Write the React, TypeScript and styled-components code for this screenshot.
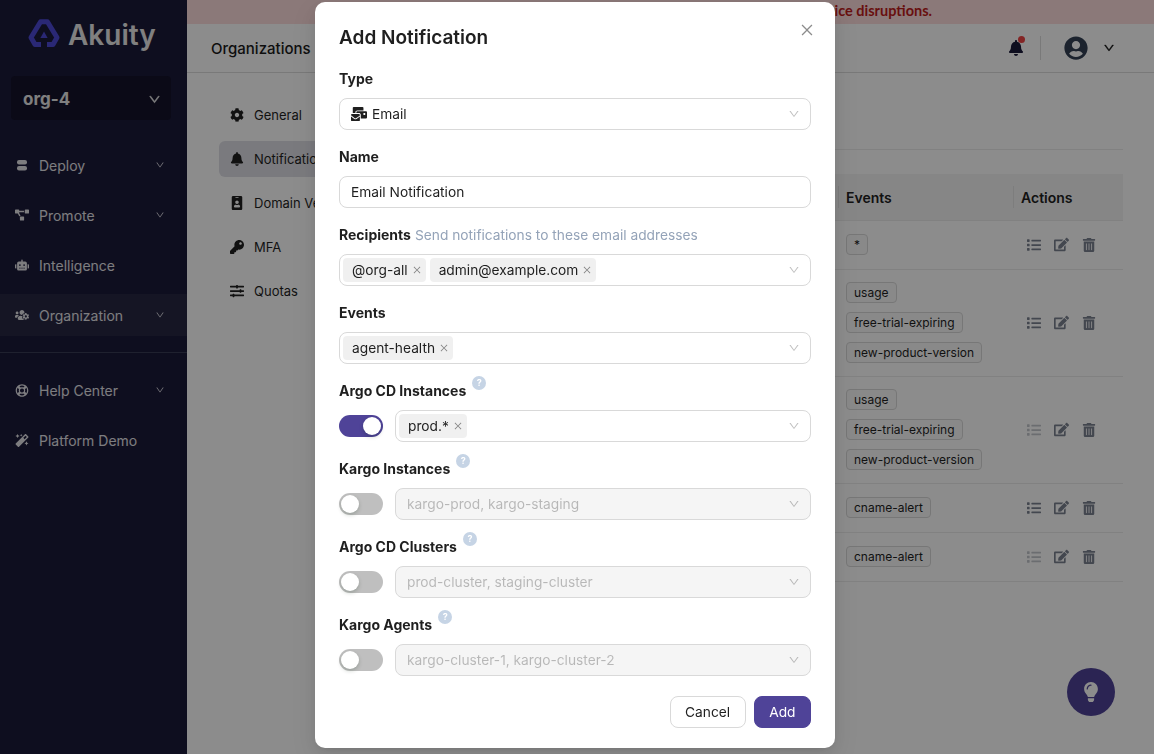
import React from "react";
import styled, { createGlobalStyle } from "styled-components";
import { AiOutlineClose, AiOutlineDown } from "react-icons/ai";
import {
  FaBell, FaCog, FaEdit, FaIdBadge, FaKey, FaLightbulb, FaList, FaMagic, FaMailBulk,
  FaProjectDiagram, FaRegLifeRing, FaRobot, FaSlidersH, FaTrashAlt, FaUserCircle, FaUsersCog,
} from "react-icons/fa";

const Global = createGlobalStyle`
  html, body { margin: 0; height: 100%; overflow: hidden; background: #fff; }
  body { font-family: Inter, "Liberation Sans", sans-serif; font-size: 14px; color: #1f1f1f; }
  * { box-sizing: border-box; }
`;

const Page = styled.div`display: flex; height: 754px; width: 1154px;`;

const Sidebar = styled.aside`
  width: 187px; flex: none; background: #1b1a3a; color: #e8e8e8; display: flex; flex-direction: column;
`;
const LogoRow = styled.div`display: flex; gap: 8px; padding: 19px 0 0 28px; height: 76px; align-items: flex-start;`;
const LogoText = styled.span`font-size: 28px; font-weight: 600; line-height: 32px; color: #e9e9e9;`;
const OrgSelect = styled.div`
  margin: 0 16px 0 11px; height: 44px; background: #14132b; border-radius: 4px; display: flex; align-items: center;
  justify-content: space-between; padding: 2px 10px 0 12px; font-size: 17px; font-weight: 700; color: #e8e8e8; line-height: 1;
`;
const NavList = styled.nav<{ $top: number }>`display: flex; flex-direction: column; margin-top: ${(p) => p.$top}px; gap: 8px;`;
const NavItem = styled.div<{ $active?: boolean }>`
  height: 42px; display: flex; align-items: center; padding: 0 22px 0 15px; gap: 10px; color: #e3e3e8; font-size: 14px;
  background: ${(p) => (p.$active ? "#272743" : "transparent")};
  & > span { flex: 1; }
  & > svg:first-child { width: 14px; flex: none; }
`;
const NavDivider = styled.hr`border: 0; border-top: 1px solid #3a3c57; margin: 16px 0; width: 100%;`;

const Main = styled.main`flex: 1; min-width: 0; display: flex; flex-direction: column;`;
const Banner = styled.div`
  height: 24px; background: #fddcdc; color: #bf1c1c; font-family: Lato, sans-serif; font-weight: 700; font-size: 14.5px;
  display: flex; align-items: center; justify-content: flex-end; padding: 0 222px 4px 0; white-space: nowrap;
`;
const Header = styled.header`
  height: 49px; border-bottom: 1px solid #dcdcdc; display: flex; align-items: center; padding: 0 39px 0 24px; color: #111;
`;
const HeaderTitle = styled.div`flex: 1; font-size: 15px; font-weight: 500; color: #1a1a1a;`;
const BellBox = styled.div`position: relative; display: flex; color: #1b1a3a; margin-right: 16px;`;
const BellDot = styled.span`position: absolute; right: -1px; top: -4px; width: 7px; height: 7px; border-radius: 50%; background: #ef4444;`;
const VDivider = styled.div`width: 1px; height: 24px; background: #dcdcdc; margin-right: 23px;`;
const Avatar = styled(FaUserCircle)`color: #334155; margin-right: 15px;`;
const HeaderCaret = styled(AiOutlineDown)`stroke: currentColor; stroke-width: 40;`;

const Content = styled.div`flex: 1; display: flex; padding: 24px 31px 0 32px;`;
const SideMenu = styled.div`width: 130px; flex: none; display: flex; flex-direction: column; gap: 8px; white-space: nowrap;`;
const MenuItem = styled.div<{ $active?: boolean }>`
  height: 36px; width: 180px; display: flex; align-items: center; gap: 10px; padding: 0 11px; border-radius: 6px; font-size: 13px; color: #1f1f1f;
  background: ${(p) => (p.$active ? "#dfdfe6" : "transparent")};
`;
const TablePanel = styled.section`flex: 1; min-width: 0; padding-top: 43px;`;
const SectionRule = styled.div`height: 10px; border-bottom: 1px solid #ececec;`;
const Table = styled.div`
  margin-top: 24px; display: grid; grid-template-columns: 1fr 175px 110px;
`;
const HeadCell = styled.div<{ $sep?: boolean }>`
  height: 47px; background: #f5f5f5; border-bottom: 1px solid #ececec; font-weight: 600; font-size: 14px; color: #222;
  display: flex; align-items: center; padding: 0 0 0 8px; position: relative;
  &:first-child { border-top-left-radius: 8px; }
  &:last-child { border-top-right-radius: 8px; }
  ${(p) => p.$sep && `&::before { content: ""; position: absolute; left: 0; top: 12px; height: 22px; width: 1px; background: #e4e4e4; }`}
`;
const Cell = styled.div`
  min-height: 49px; border-bottom: 1px solid #ececec; padding: 12px 8px 13px; display: flex; flex-direction: column; align-items: flex-start; gap: 9px; justify-content: center;
`;
const Tag = styled.span`
  height: 21px; line-height: 19px; padding: 0 7px; font-size: 12px; border: 1px solid #d9d9d9; border-radius: 4px; background: #fafafa; color: #1f1f1f; white-space: nowrap;
`;
const Actions = styled.div`display: flex; align-items: center; gap: 13px; padding-left: 6px; height: 100%; color: #7b8290;`;
const ActionIcon = styled.span<{ $dim?: boolean }>`display: flex; opacity: ${(p) => (p.$dim ? 0.45 : 1)};`;

const Fab = styled.div`
  position: fixed; left: 1067px; top: 668px; width: 48px; height: 48px; border-radius: 50%; background: #4f4398; color: #fff;
  display: flex; align-items: center; justify-content: center;
`;

const Overlay = styled.div`
  position: fixed; inset: 0; background: rgba(0, 0, 0, 0.45); padding: 2px 0 0 315px;
`;
const Modal = styled.div`
  width: 520px; height: 746px; background: #fff; border-radius: 10px; padding: 21px 24px 20px; position: relative;
  box-shadow: 0 6px 16px rgba(0,0,0,.08), 0 3px 6px -4px rgba(0,0,0,.12), 0 9px 28px 8px rgba(0,0,0,.05);
`;
const CloseBtn = styled.div`position: absolute; top: 20px; right: 20px; color: rgba(0,0,0,.45); display: flex;`;
const Title = styled.h2`margin: 0 0 17px; font-size: 19px; line-height: 30px; height: 28px; font-weight: 600; color: #1f1f1f;`;
const Field = styled.div`margin-bottom: 16px;`;
const LabelRow = styled.div<{ $gap?: number }>`display: flex; align-items: flex-start; gap: ${(p) => p.$gap ?? 6}px; height: 22px; margin-bottom: 8px; line-height: 22px;`;
const LabelText = styled.label`font-size: 14px; font-weight: 700; color: #1f1f1f;`;
const LabelHint = styled.span`font-size: 13.75px; font-weight: 400; color: #94a3b8;`;
const Help = styled.span`
  width: 14px; height: 14px; border-radius: 50%; background: #c6d4e5; color: #fff; font-size: 9px; font-weight: 700; line-height: 14px; text-align: center; margin-top: -4px;
`;
const Row = styled.div`display: flex; align-items: center; gap: 12px;`;
const SelectBox = styled.div<{ $disabled?: boolean; $tags?: boolean }>`
  flex: 1; min-width: 0; height: 32px; border: 1px solid #d9d9d9; border-radius: 8px; display: flex; align-items: center; gap: 4px;
  padding: 0 10px 0 ${(p) => (p.$tags ? "3px" : "11px")};
  background: ${(p) => (p.$disabled ? "#f5f5f5" : "#fff")}; color: ${(p) => (p.$disabled ? "rgba(0,0,0,.25)" : "#1f1f1f")};
`;
const SelectValue = styled.span`flex: 1; display: flex; align-items: center; gap: 5px; font-size: 13.75px; line-height: 20px; white-space: nowrap;`;
const Chips = styled.div`flex: 1; display: flex; gap: 4px;`;
const Chip = styled.span`
  height: 24px; border-radius: 4px; background: rgba(0,0,0,.06); padding: 0 4px 0 9px; display: inline-flex; align-items: center; gap: 4px; font-size: 13.75px; line-height: 20px; color: #1f1f1f;
  svg { color: rgba(0,0,0,.45); }
`;
const Caret = styled(AiOutlineDown)`color: rgba(0,0,0,.25); flex: none;`;
const TextInput = styled.div`
  height: 32px; border: 1px solid #d9d9d9; border-radius: 8px; padding: 0 11px; display: flex; align-items: center; font-size: 13.75px; line-height: 20px; color: #1f1f1f;
`;
const Switch = styled.span<{ $on?: boolean }>`
  width: 44px; height: 22px; flex: none; border-radius: 11px; padding: 2px; display: flex;
  justify-content: ${(p) => (p.$on ? "flex-end" : "flex-start")}; background: ${(p) => (p.$on ? "#4f4398" : "rgba(0,0,0,.25)")};
  &::after { content: ""; width: 18px; height: 18px; border-radius: 50%; background: #fff; box-shadow: 0 2px 4px rgba(0,35,11,.2); }
`;
const Footer = styled.div`display: flex; justify-content: flex-end; gap: 8px; margin-top: 20px;`;
const Button = styled.button<{ $primary?: boolean }>`
  height: 32px; padding: 0 14.5px; border-radius: 8px; font: 400 13.75px Inter, sans-serif;
  border: 1px solid ${(p) => (p.$primary ? "#4f4398" : "#d9d9d9")};
  background: ${(p) => (p.$primary ? "#4f4398" : "#fff")}; color: ${(p) => (p.$primary ? "#fff" : "#1f1f1f")};
`;

const Logo = () => (
  <svg width="32" height="28" viewBox="0 0 32 28" fill="none">
    <path d="M13 25.5H7L3 18.5 12.6 2.7h6.8L29 18.5l-4 7H19" stroke="#4d49d6" strokeWidth="5" strokeLinejoin="round" />
    <path d="M16 12.5l3.6 6.5h-7.2z" fill="#4d49d6" />
  </svg>
);

const DeployIcon = () => (
  <svg width="14" height="11" viewBox="0 0 14 11" fill="currentColor">
    <rect x="2" y="0" width="10" height="4.6" rx="2" />
    <rect x="2" y="6" width="10" height="4.6" rx="2" />
  </svg>
);

const nav = [
  { icon: <DeployIcon />, label: "Deploy", caret: true },
  { icon: <FaProjectDiagram size={12} />, label: "Promote", caret: true },
  { icon: <FaRobot size={14} />, label: "Intelligence", caret: false },
  { icon: <FaUsersCog size={14} />, label: "Organization", caret: true, active: true },
];
const menu = [
  { icon: <FaCog size={14} />, label: "General" },
  { icon: <FaBell size={14} />, label: "Notifications", active: true },
  { icon: <FaIdBadge size={14} />, label: "Domain Verification" },
  { icon: <FaKey size={14} />, label: "MFA" },
  { icon: <FaSlidersH size={14} />, label: "Quotas" },
];
const three = ["usage", "free-trial-expiring", "new-product-version"];
const rows = [
  { tags: ["*"], dim: false },
  { tags: three, dim: false },
  { tags: three, dim: true },
  { tags: ["cname-alert"], dim: false },
  { tags: ["cname-alert"], dim: true },
];

const Toggled = ({ label, on, children }: { label: string; on?: boolean; children: React.ReactNode }) => (
  <Field>
    <LabelRow>
      <LabelText>{label}</LabelText>
      <Help>?</Help>
    </LabelRow>
    <Row>
      <Switch $on={on} />
      {children}
    </Row>
  </Field>
);

const Disabled = ({ text }: { text: string }) => (
  <SelectBox $disabled>
    <SelectValue>{text}</SelectValue>
    <Caret size={12} />
  </SelectBox>
);

const Pill = ({ text }: { text: string }) => (
  <Chip>
    {text}
    <AiOutlineClose size={10} />
  </Chip>
);

export default function App() {
  return (
    <>
      <Global />
      <Page>
        <Sidebar>
          <LogoRow>
            <Logo />
            <LogoText>Akuity</LogoText>
          </LogoRow>
          <OrgSelect>
            org-4
            <HeaderCaret size={13} />
          </OrgSelect>
          <NavList $top={24}>
            {nav.map((n) => (
              <NavItem key={n.label} $active={n.active}>
                {n.icon}
                <span>{n.label}</span>
                {n.caret && <AiOutlineDown size={10} />}
              </NavItem>
            ))}
          </NavList>
          <NavDivider />
          <NavList $top={0}>
            <NavItem>
              <FaRegLifeRing size={13} />
              <span>Help Center</span>
              <AiOutlineDown size={10} />
            </NavItem>
            <NavItem>
              <FaMagic size={13} />
              <span>Platform Demo</span>
            </NavItem>
          </NavList>
        </Sidebar>
        <Main>
          <Banner>Your free trial is about to expire. Please add billing details to avoid service disruptions.</Banner>
          <Header>
            <HeaderTitle>Organizations</HeaderTitle>
            <BellBox>
              <FaBell size={16} />
              <BellDot />
            </BellBox>
            <VDivider />
            <Avatar size={24} />
            <HeaderCaret size={12} />
          </Header>
          <Content>
            <SideMenu>
              {menu.map((m) => (
                <MenuItem key={m.label} $active={m.active}>
                  {m.icon}
                  {m.label}
                </MenuItem>
              ))}
            </SideMenu>
            <TablePanel>
              <SectionRule />
              <Table>
                <HeadCell />
                <HeadCell $sep>Events</HeadCell>
                <HeadCell $sep>Actions</HeadCell>
                {rows.map((r, i) => (
                  <React.Fragment key={i}>
                    <Cell />
                    <Cell>
                      {r.tags.map((t) => (
                        <Tag key={t}>{t}</Tag>
                      ))}
                    </Cell>
                    <Cell>
                      <Actions>
                        <ActionIcon $dim={r.dim}>
                          <FaList size={14} />
                        </ActionIcon>
                        <ActionIcon>
                          <FaEdit size={15} />
                        </ActionIcon>
                        <ActionIcon>
                          <FaTrashAlt size={14} />
                        </ActionIcon>
                      </Actions>
                    </Cell>
                  </React.Fragment>
                ))}
              </Table>
            </TablePanel>
          </Content>
        </Main>
      </Page>
      <Fab>
        <FaLightbulb size={20} />
      </Fab>
      <Overlay>
        <Modal>
          <CloseBtn>
            <AiOutlineClose size={16} />
          </CloseBtn>
          <Title>Add Notification</Title>
          <Field>
            <LabelRow><LabelText>Type</LabelText></LabelRow>
            <SelectBox>
              <SelectValue>
                <FaMailBulk size={16} />
                Email
              </SelectValue>
              <Caret size={12} />
            </SelectBox>
          </Field>
          <Field>
            <LabelRow><LabelText>Name</LabelText></LabelRow>
            <TextInput>Email Notification</TextInput>
          </Field>
          <Field>
            <LabelRow $gap={4}>
              <LabelText>Recipients</LabelText>
              <LabelHint>Send notifications to these email addresses</LabelHint>
            </LabelRow>
            <SelectBox $tags>
              <Chips>
                <Pill text="@org-all" />
                <Pill text="admin@example.com" />
              </Chips>
              <Caret size={12} />
            </SelectBox>
          </Field>
          <Field>
            <LabelRow><LabelText>Events</LabelText></LabelRow>
            <SelectBox $tags>
              <Chips>
                <Pill text="agent-health" />
              </Chips>
              <Caret size={12} />
            </SelectBox>
          </Field>
          <Toggled label="Argo CD Instances" on>
            <SelectBox $tags>
              <Chips>
                <Pill text="prod.*" />
              </Chips>
              <Caret size={12} />
            </SelectBox>
          </Toggled>
          <Toggled label="Kargo Instances">
            <Disabled text="kargo-prod, kargo-staging" />
          </Toggled>
          <Toggled label="Argo CD Clusters">
            <Disabled text="prod-cluster, staging-cluster" />
          </Toggled>
          <Toggled label="Kargo Agents">
            <Disabled text="kargo-cluster-1, kargo-cluster-2" />
          </Toggled>
          <Footer>
            <Button>Cancel</Button>
            <Button $primary>Add</Button>
          </Footer>
        </Modal>
      </Overlay>
    </>
  );
}
